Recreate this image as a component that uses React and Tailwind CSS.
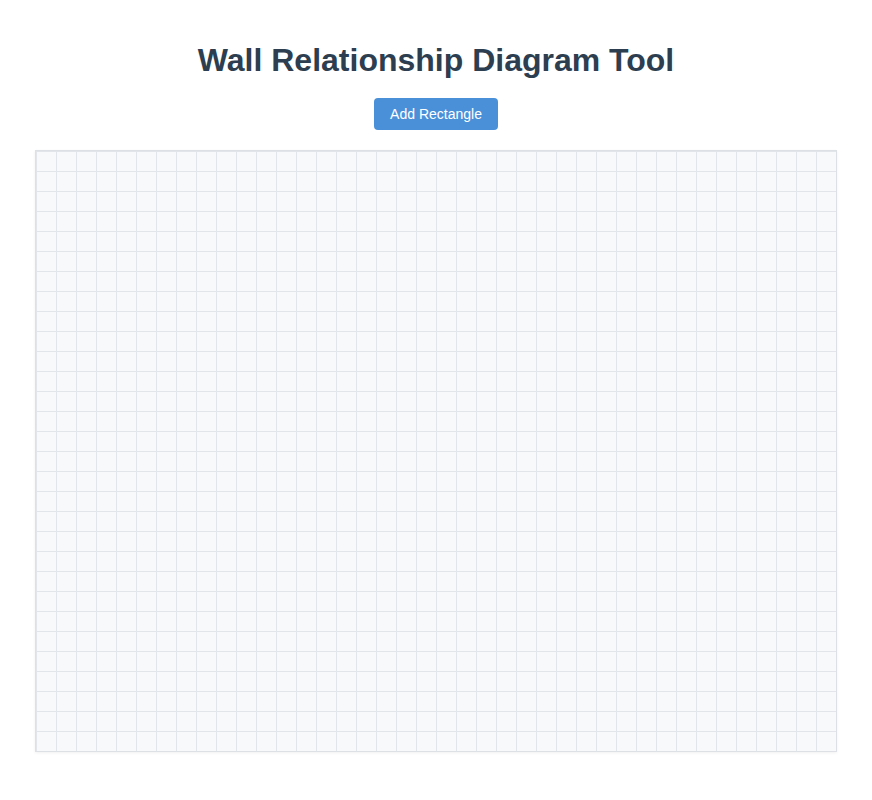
export default function App() {
  return (
    <div className="min-h-[800px] bg-white px-5 font-['Liberation_Sans',Arial,sans-serif]">
      <div className="flex flex-col items-center">
        <h1 className="mt-[42px] text-[32px] leading-[37px] font-bold text-[#2c3e50]">
          Wall Relationship Diagram Tool
        </h1>
        <button className="mt-[19px] rounded bg-[#4a90d9] px-4 py-2 text-sm leading-4 text-white hover:bg-[#357abd]">
          Add Rectangle
        </button>
        <div className="mt-5 h-[602px] w-[802px] border border-[#dde1e5] bg-[#f8f9fb] bg-[linear-gradient(to_right,#e2e6ea_1px,transparent_1px),linear-gradient(to_bottom,#e2e6ea_1px,transparent_1px)] bg-[size:20px_20px] shadow-[0_1px_3px_rgba(0,0,0,0.06)]"></div>
      </div>
    </div>
  );
}
